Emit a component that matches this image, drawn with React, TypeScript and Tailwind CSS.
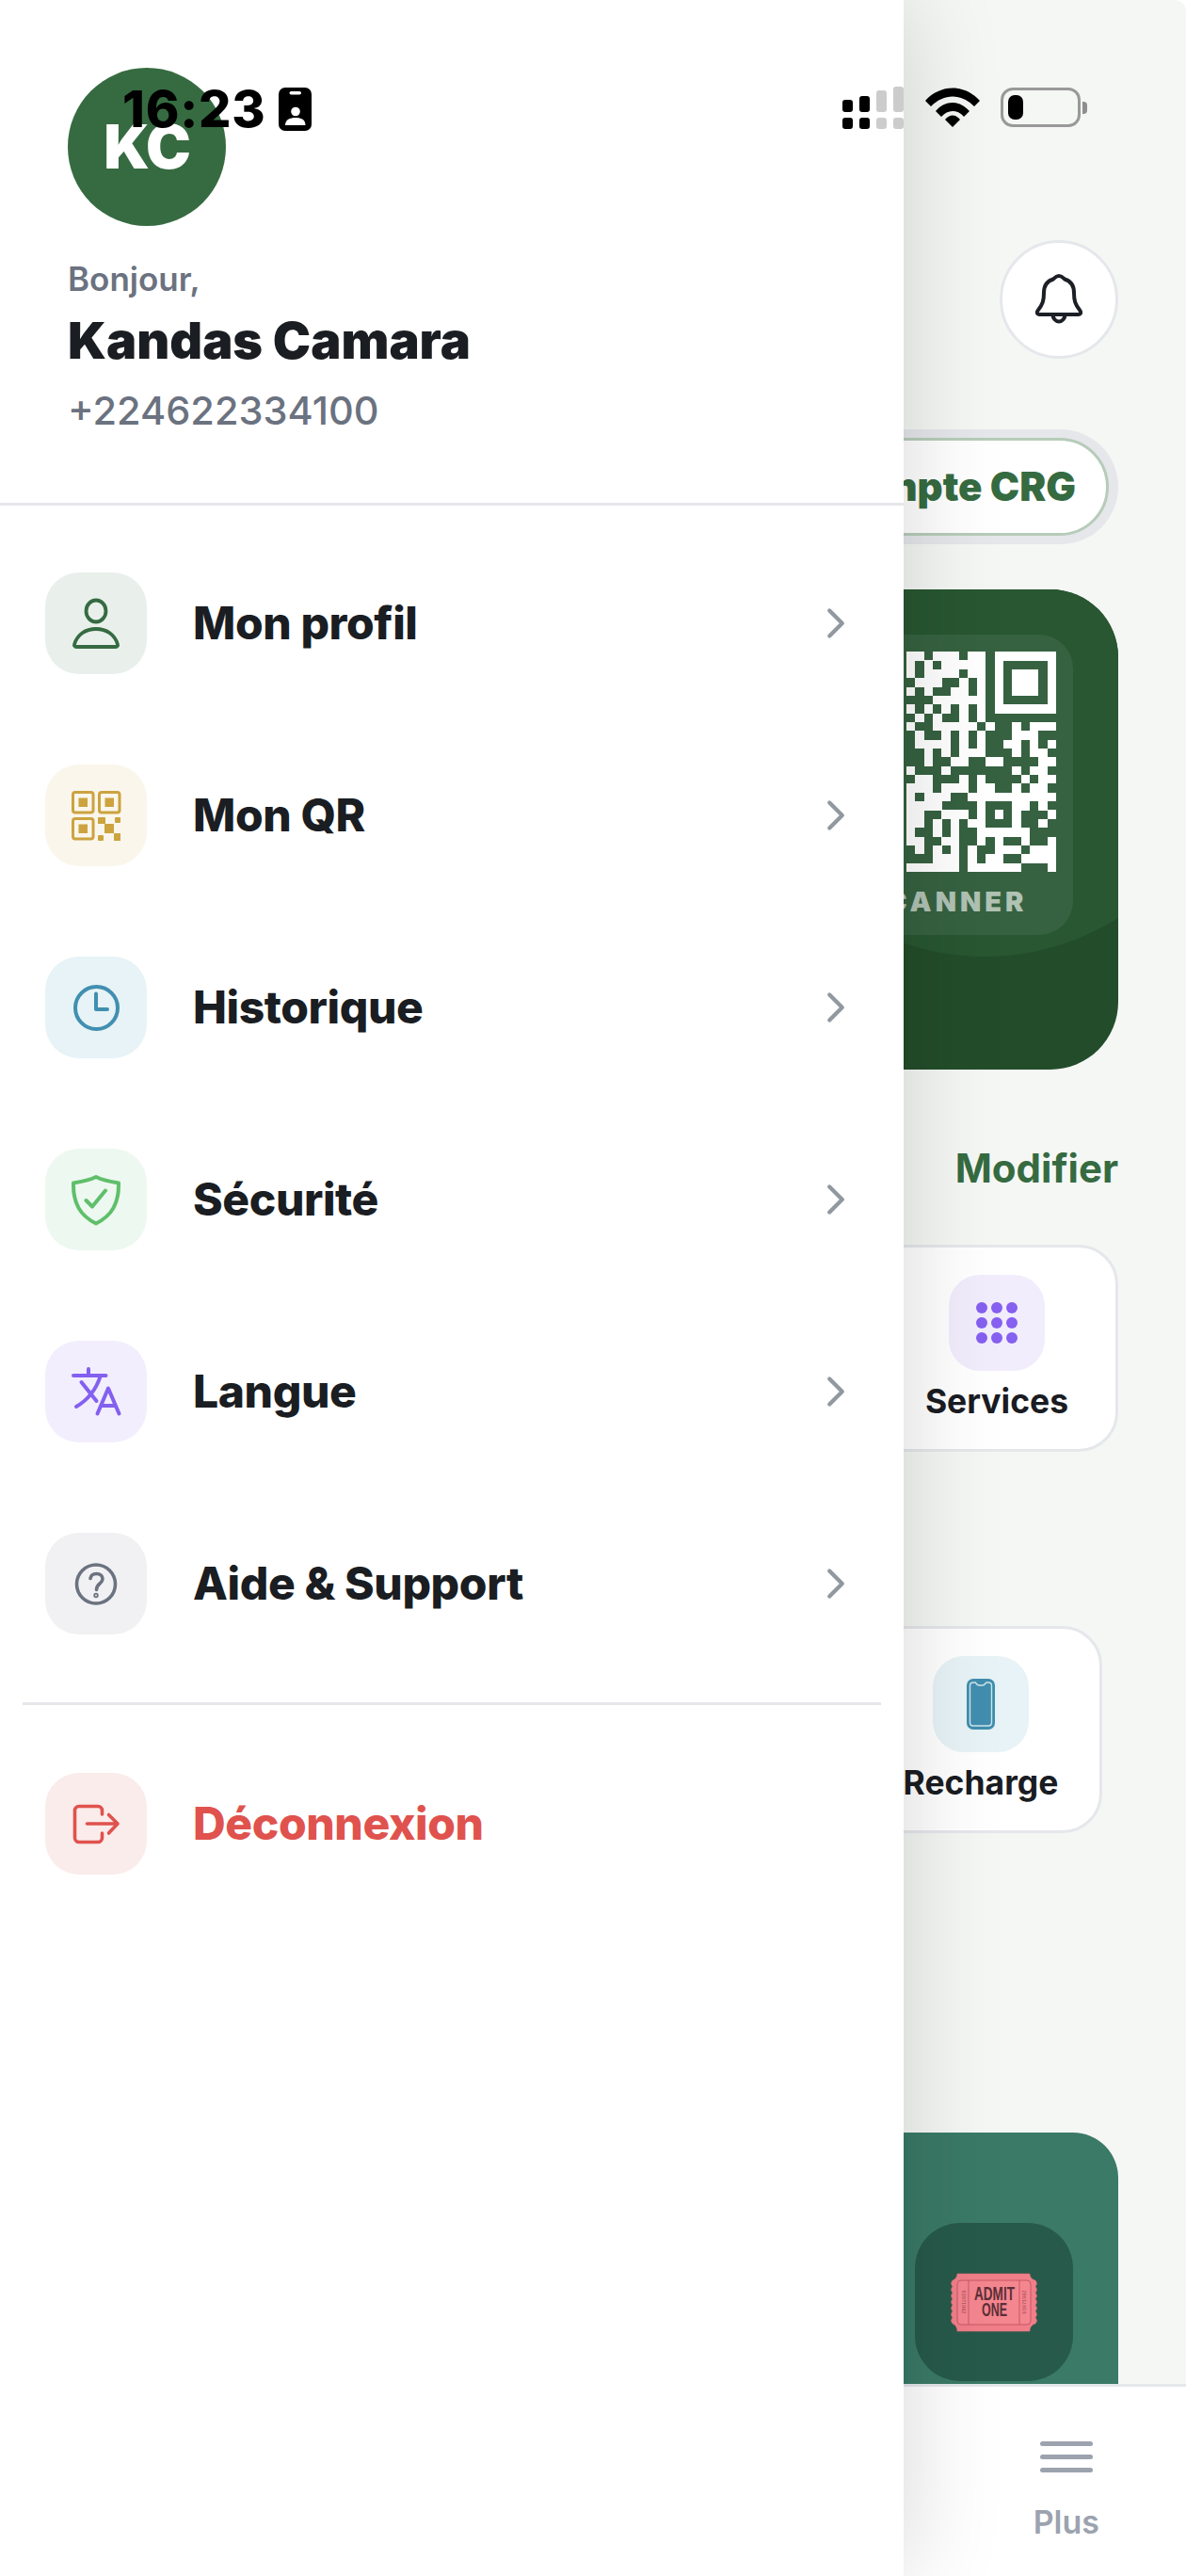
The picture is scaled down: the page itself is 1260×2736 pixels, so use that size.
import { ChevronRight } from 'lucide-react'
import type { ReactNode } from 'react'

const QR_ROWS = [
  '11011101101111111',
  '10101111101000001',
  '10111101101011101',
  '01110010101011101',
  '10100110101011101',
  '00011111101000001',
  '10101010101111111',
  '01010010100000000',
  '10011111010010111',
  '01001010100011100',
  '01111010100110101',
  '00101011100010110',
  '00100110011000011',
  '10001000000010110',
  '01100010100001011',
  '11101110110010110',
  '10111001111111111',
  '11110000100011010',
  '11001110101010001',
  '11010101100010010',
  '10010100111111000',
  '11001100101001001',
  '01010101001110111',
  '00011101011001111',
  '11111101111110001',
]

function QrCode() {
  return (
    <svg width={159} height={234} viewBox="0 0 17 25" shapeRendering="crispEdges" className="block">
      {QR_ROWS.map((row, y) =>
        row.split('').map((cell, x) =>
          cell === '1' ? <rect key={`${x}-${y}`} x={x} y={y} width={1.01} height={1.01} fill="#fff" /> : null,
        ),
      )}
    </svg>
  )
}

function scallop(x: number, from: number, to: number, dir: number) {
  const n = 7
  const step = (to - from) / n
  let d = ''
  for (let i = 0; i < n; i++) {
    d += ` Q${x + dir * 3} ${from + step * (i + 0.5)} ${x} ${from + step * (i + 1)}`
  }
  return d
}

function Ticket() {
  const d =
    `M7 1 H84 C84 4 86 7 90 8` +
    scallop(90, 8, 54, 1) +
    ` C86 55 84 58 84 62 H7 C7 58 5 55 2 54` +
    scallop(2, 54, 8, -1) +
    ` C5 7 7 4 7 1Z`
  return (
    <svg width={92} height={63} viewBox="0 0 92 63">
      <path d={d} fill="#f07f8a" stroke="#e06f7b" strokeWidth={0.6} />
      <rect x={7} y={8} width={78} height={47} rx={4} fill="#f48690" stroke="#c4525f" strokeWidth={0.9} />
      <path d="M19 8V55M73 8V55" stroke="#c4525f" strokeWidth={0.9} />
      <g fill="#5c2f37" fontFamily="'Liberation Sans', sans-serif" fontWeight={700} fontSize={20}>
        <text x={25} y={28.5} textLength={43} lengthAdjust="spacingAndGlyphs">ADMIT</text>
        <text x={33} y={46} textLength={27} lengthAdjust="spacingAndGlyphs">ONE</text>
      </g>
      <g fill="#a4464f" fontFamily="'Liberation Mono', monospace" fontSize={5.2} textAnchor="middle">
        <text transform="translate(12 31) rotate(90)">01071982</text>
        <text transform="translate(80 31) rotate(-90)">01071982</text>
      </g>
    </svg>
  )
}

function Wifi() {
  return (
    <svg width={58} height={42} viewBox="0 0 58 42" fill="#000">
      <path d="M0 14 C16 -4 42 -4 58 14 L52 20 C38 6 20 6 6 20Z" />
      <path d="M11 25 C21 13 37 13 47 25 L41 31 C34 23 24 23 17 31Z" />
      <path d="M21 34 C26 28 32 28 37 34 L29 42Z" />
    </svg>
  )
}

function StatusBar() {
  return (
    <div className="absolute top-0 left-0 z-20 w-[1260px] h-[150px]">
      <div className="flex items-start pl-[130px] pt-[83px]">
        <span className="font-extrabold text-[54px] leading-[66px] tracking-[0.8px] text-black w-[166px]">16:23</span>
        <svg width={35} height={46} viewBox="0 0 35 46" className="mt-[10px]">
          <rect width={35} height={46} rx={7} fill="#000" />
          <rect x={11.5} y={4} width={12.5} height={3.6} rx={1.8} fill="#fff" />
          <circle cx={18} cy={25.5} r={4.8} fill="#fff" />
          <path d="M7 40 C7 34 12 32 18 32 S28.500 34 28.500 40Z" fill="#fff" />
        </svg>
      </div>
      <div className="absolute top-[92px] left-[895px] flex gap-[7px]">
        {[
          { h: 'h-[13px]', c: 'bg-black' },
          { h: 'h-[17px]', c: 'bg-black' },
          { h: 'h-[23px]', c: 'bg-[#cccccc]' },
          { h: 'h-[27px]', c: 'bg-[#cccccc]' },
        ].map((b, i) => (
          <div key={i} className="flex flex-col justify-end gap-[6px] w-[11px] h-[45px]">
            <div className={`w-full rounded-[3px] ${b.h} ${b.c}`} />
            <div className={`w-full h-[12px] rounded-[3px] ${b.c}`} />
          </div>
        ))}
      </div>
      <div className="absolute top-[93px] left-[983px]">
        <Wifi />
      </div>
      <div className="absolute top-[93px] left-[1063px] flex items-center">
        <div className="w-[85px] h-[42px] rounded-[13px] border-[3px] border-[#999999] p-[5px]">
          <div className="w-[16px] h-full rounded-[7px] bg-black" />
        </div>
        <div className="w-[5px] h-[13px] ml-[2px] rounded-r-[4px] bg-[#8e8e8e]" />
      </div>
    </div>
  )
}

function Background() {
  return (
    <div className="absolute inset-0 flex flex-col bg-[#f5f7f5] rounded-tr-[12px] overflow-hidden">
      <div className="flex-1 min-h-0 overflow-hidden flex flex-col items-end pr-[72px] pt-[255px]">
        <div className="shrink-0 flex items-center justify-center w-[126px] h-[126px] rounded-full bg-white border-[3px] border-[#e5e7eb]">
          <svg width={60} height={60} viewBox="0 0 60 60" fill="none" stroke="#1c1f26" strokeWidth={4} strokeLinejoin="round">
            <path d="M30 5C33 5 34.500 7 36 8.500C42.500 10.500 46 16 46 23C46 31 47 35 52.500 42C54 44 53 46 51 46H9C7 46 6 44 7.500 42C13 35 14 31 14 23C14 16 17.500 10.500 24 8.500C25.500 7 27 5 30 5Z" />
            <path d="M23.500 46a6.500 7.500 0 0 0 13 0" />
          </svg>
        </div>

        <div className="shrink-0 mt-[75px] w-[700px] h-[122px] rounded-[61px] bg-[#e5e7eb] p-[9px] pr-[10px]">
          <div className="h-full rounded-[52px] bg-white border-[3px] border-[#b6ccb9] flex items-center justify-end pr-[32px] pb-[2px]">
            <span className="font-black text-[42px] text-[#366b41]">Compte CRG</span>
          </div>
        </div>

        <div className="relative mt-[48px] w-[1116px] h-[510px] rounded-[72px] bg-[#234d2a] overflow-hidden flex justify-end pt-[48px] pr-[48px] shrink-0">
          <div className="absolute left-[708px] top-[-142px] w-[532px] h-[532px] rounded-full bg-[#285731]" />
          <div className="relative w-[270px] h-[319px] rounded-[36px] bg-[#366241] flex flex-col items-end pt-[18px] pr-[18px]">
            <QrCode />
            <div className="w-[270px] text-center mr-[-18px] mt-[12px] font-black text-[29px] leading-[40px] tracking-[4px] text-[#b0c2b4]">SCANNER</div>
          </div>
        </div>

        <span className="shrink-0 mt-[80px] font-bold text-[42px] leading-[50px] text-[#366b41]">Modifier</span>

        <Shortcut className="mt-[56px]" label="Services" box="bg-[#f1edfc]">
          <div className="grid grid-cols-3 gap-[4px]">
            {Array.from({ length: 9 }).map((_, i) => (
              <div key={i} className="w-[12px] h-[12px] rounded-full bg-[#8660f0]" />
            ))}
          </div>
        </Shortcut>

        <Shortcut className="mt-[185px] mr-[17px]" label="Recharge" box="bg-[#e7f3f6]">
          <svg width={30} height={54} viewBox="0 0 30 54">
            <rect width={30} height={54} rx={7} fill="#418eaf" />
            <path d="M7 4H9C10 4 10.500 7 13 7H17C19.500 7 20 4 21 4H23C25 4 26.500 5.500 26.500 7.500V46.500C26.500 48.500 25 50 23 50H7C5 50 3.500 48.500 3.500 46.500V7.500C3.500 5.500 5 4 7 4Z" fill="#418eaf" stroke="#cfe5ec" strokeWidth={1.4} />
          </svg>
        </Shortcut>

        <div className="mt-[318px] w-[1116px] h-[400px] shrink-0 rounded-[48px] bg-[#3a7a66] flex justify-end pt-[96px] pr-[48px]">
          <div className="w-[168px] h-[168px] rounded-[48px] bg-[#275a4b] flex items-center justify-center">
            <Ticket />
          </div>
        </div>
      </div>

      <nav className="h-[204px] shrink-0 bg-white border-t-[3px] border-[#e5e7eb] flex justify-end pr-[92px] relative">
        <div className="flex flex-col items-center pt-[58px]">
          <div className="flex flex-col gap-[9px]">
            <div className="w-[56px] h-[5px] rounded-full bg-[#9ca3af]" />
            <div className="w-[56px] h-[5px] rounded-full bg-[#9ca3af]" />
            <div className="w-[56px] h-[5px] rounded-full bg-[#9ca3af]" />
          </div>
          <span className="mt-[31px] font-semibold text-[34px] leading-[44px] text-[#9ca3af]">Plus</span>
        </div>
      </nav>
    </div>
  )
}

function Shortcut(props: { className: string; label: string; box: string; children: ReactNode }) {
  return (
    <div className={`w-[420px] h-[220px] shrink-0 rounded-[42px] bg-white border-[3px] border-[#e5e7eb] flex flex-col items-end ${props.className}`}>
      <div className="w-[200px] flex flex-col items-center pt-[29px] mr-[26px]">
        <div className={`w-[102px] h-[102px] rounded-[33px] flex items-center justify-center ${props.box}`}>
          {props.children}
        </div>
        <span className="mt-[8px] font-bold text-[35.5px] leading-[50px] text-[#1a1c23] whitespace-nowrap">{props.label}</span>
      </div>
    </div>
  )
}

const stroke = { fill: 'none', strokeWidth: 4, strokeLinecap: 'round', strokeLinejoin: 'round' } as const

const ICONS: Record<string, ReactNode> = {
  profil: (
    <svg width={60} height={60} viewBox="0 0 60 60" stroke="#366b41" {...stroke} strokeWidth={3.8}>
      <ellipse cx={30} cy={17} rx={10.500} ry={11.500} />
      <path d="M9 55H51C52.500 55 53.500 53.500 53 52.500C50 42 41 36 30 36S10 42 7 52.500C6.500 53.500 7.500 55 9 55Z" />
    </svg>
  ),
  qr: (
    <svg width={60} height={60} viewBox="-4 -4 60 60" fill="#cca33f">
      {[[0, 0], [28, 0], [0, 28]].map(([x, y]) => (
        <g key={`${x}${y}`}>
          <rect x={x + 1.5} y={y + 1.5} width={21.500} height={21.500} rx={2.500} fill="none" stroke="#cca33f" strokeWidth={3} />
          <rect x={x + 7.500} y={y + 7.500} width={9.500} height={9.500} />
        </g>
      ))}
      <rect x={28} y={28} width={8} height={7} rx={0.5} />
      <rect x={46} y={28} width={6} height={6} rx={1} />
      <rect x={35} y={35} width={10} height={10} rx={0.5} />
      <rect x={28} y={47} width={6} height={6} rx={1} />
      <rect x={45} y={45} width={7} height={8} rx={0.5} />
    </svg>
  ),
  historique: (
    <svg width={60} height={60} viewBox="0 0 60 60" stroke="#418fb0" {...stroke}>
      <circle cx={30.500} cy={30.500} r={22.500} />
      <path d="M30 15.500V32H42" />
    </svg>
  ),
  securite: (
    <svg width={60} height={60} viewBox="0 0 60 60" stroke="#5fbf6b" {...stroke}>
      <path d="M30 6C36 9 44 11 54 12.500C54.500 34 47 47 30 55.500C13 47 5.500 34 6 12.500C16 11 24 9 30 6Z" />
      <path d="M19.500 31L26 37.500L40 20.500" />
    </svg>
  ),
  langue: (
    <svg width={60} height={60} viewBox="0 0 60 60" stroke="#8360ef" {...stroke}>
      <path d="M6 13H40.500M22 6V13M14.500 20L30.500 40M34.500 14C30 28 21 39 9 46" />
      <path d="M31.500 53.500L43 26.500L54.500 53.500M35.500 45H50.500" />
    </svg>
  ),
  aide: (
    <svg width={60} height={60} viewBox="0 0 60 60" stroke="#6b7280" {...stroke} strokeWidth={3.6}>
      <circle cx={30} cy={30.500} r={20.500} />
      <path d="M24 24.500C24.500 21 27 19.500 30.500 19.500C34.500 19.500 37 22 37 25C37 30 30.500 30 30.500 36.500" />
      <circle cx={30} cy={42.500} r={0.9} />
    </svg>
  ),
  logout: (
    <svg width={60} height={60} viewBox="0 0 60 60" stroke="#e0524d" {...stroke} strokeWidth={3.6}>
      <path d="M36.500 20V16C36.500 13.500 34.500 11.500 32 11.500H12C9.500 11.500 7.500 13.500 7.500 16V45C7.500 47.500 9.500 49.500 12 49.500H32C34.500 49.500 36.500 47.500 36.500 45V40" />
      <path d="M20.500 30H53M43.500 20.500L53 30L43.500 40" />
    </svg>
  ),
}

function MenuRow(props: { icon: string; label: string; box: string; red?: boolean }) {
  return (
    <div className="flex items-center h-[108px] pl-[48px] pr-[45px]">
      <div className={`w-[108px] h-[108px] rounded-[36px] flex items-center justify-center shrink-0 ${props.box}`}>
        {ICONS[props.icon]}
      </div>
      <span className={`ml-[49px] flex-1 font-extrabold text-[48px] leading-[60px] tracking-[-0.4px] ${props.red ? 'text-[#e0524d]' : 'text-[#1a1d22]'}`}>
        {props.label}
      </span>
      {!props.red && <ChevronRight size={54} strokeWidth={1.9} color="#9298a0" />}
    </div>
  )
}

function Drawer() {
  return (
    <aside className="absolute top-0 left-0 z-10 w-[960px] h-[2736px] bg-white shadow-[0_0_100px_rgba(0,0,0,0.16)]">
      <header className="h-[537px] border-b-[3px] border-[#e5e7eb] px-[72px] pt-[72px]">
        <div className="w-[168px] h-[168px] rounded-full bg-[#366b41] flex items-center justify-center">
          <span className="font-black text-[64px] tracking-[-1px] text-white">KC</span>
        </div>
        <div className="mt-[34px] font-semibold text-[35px] leading-[44px] text-[#6b7280]">Bonjour,</div>
        <div className="mt-[8px] font-black text-[54px] leading-[72px] text-[#1a1d22]">Kandas Camara</div>
        <div className="mt-[11px] font-medium text-[41.5px] leading-[54px] text-[#6b7280]">+224622334100</div>
      </header>
      <div className="flex flex-col gap-[96px] pt-[71px]">
        <MenuRow icon="profil" label="Mon profil" box="bg-[#e9f0ec]" />
        <MenuRow icon="qr" label="Mon QR" box="bg-[#faf6ec]" />
        <MenuRow icon="historique" label="Historique" box="bg-[#e7f3f6]" />
        <MenuRow icon="securite" label="Sécurité" box="bg-[#edf8f0]" />
        <MenuRow icon="langue" label="Langue" box="bg-[#f2eefd]" />
        <MenuRow icon="aide" label="Aide & Support" box="bg-[#f1f1f3]" />
      </div>
      <div className="mx-[24px] mt-[72px] h-[3px] bg-[#e5e7eb]" />
      <div className="pt-[72px]">
        <MenuRow icon="logout" label="Déconnexion" box="bg-[#faeceb]" red />
      </div>
    </aside>
  )
}

export default function App() {
  return (
    <div className="relative w-[1260px] h-[2736px] bg-white overflow-hidden font-['Inter',sans-serif]">
      <Background />
      <Drawer />
      <StatusBar />
    </div>
  )
}
